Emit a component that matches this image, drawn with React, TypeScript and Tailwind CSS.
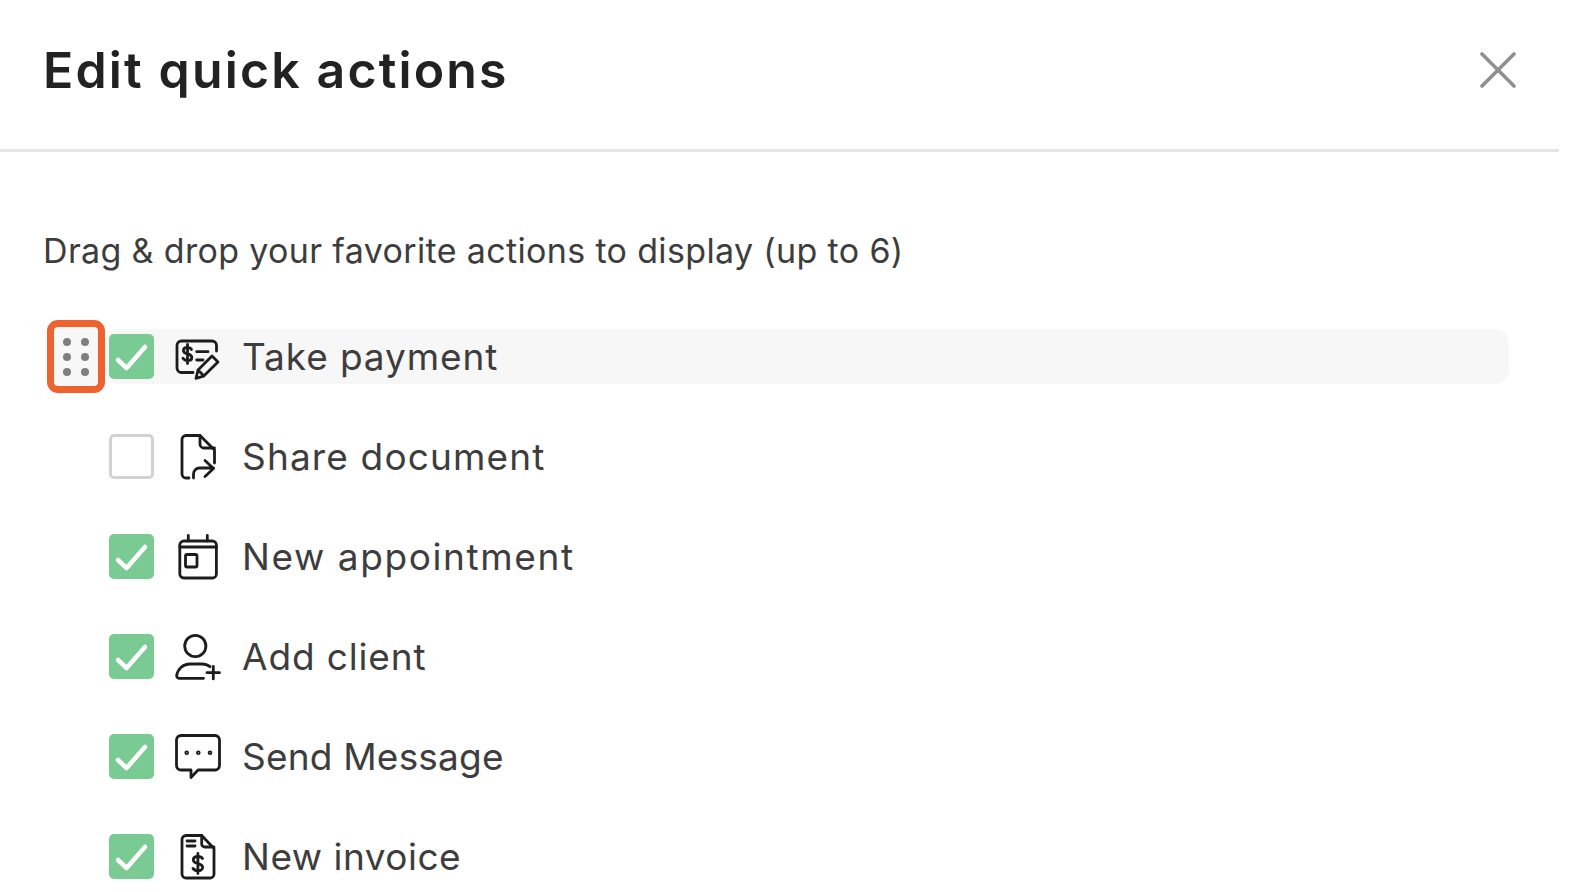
import React from "react";

const S = { fill: "none", stroke: "#1c1c1c", strokeWidth: 2.8, strokeLinecap: "round" as const, strokeLinejoin: "round" as const };

function Ico({ children }: { children: React.ReactNode }) {
  return (
    <svg width="48" height="48" viewBox="0 0 48 48" {...S} className="shrink-0">
      {children}
    </svg>
  );
}

const Payment = () => (
  <Ico>
    <path d="M19 39.5H7.5a4.5 4.5 0 0 1-4.5-4.5V12.5A4.5 4.5 0 0 1 7.5 8h30.5a4.5 4.5 0 0 1 4.5 4.5V18" />
    <path d="M17.5 16.5c-1-1.6-2.5-2.2-4.2-2.2-2.3 0-3.9 1.2-3.9 3.1 0 4.6 8.4 2.4 8.4 7 0 2-1.8 3.2-4.2 3.2-1.9 0-3.5-.8-4.6-2.4M13.5 11.5v19" />
    <path d="M22.7 18.7H34M22.7 27H29" />
    <path d="M22 45.3l2-8.3L38 23l6 6-14.5 14.2zM24 37l6 6" />
  </Ico>
);
const Share = () => (
  <Ico>
    <path d="M15 45H12a4 4 0 0 1-4-4V6.5a4 4 0 0 1 4-4H26L40.5 17V30" />
    <path d="M26 2.5V11a4 4 0 0 0 4 4H40.5" />
    <path d="M19.5 45V41a6 6 0 0 1 6-6H39.5M31 27.5L39.5 35.5L31 43.5" />
  </Ico>
);
const Calendar = () => (
  <Ico>
    <rect x="5.8" y="8" width="36.6" height="37" rx="4" />
    <path d="M14.3 2.5V8M33.3 2.5V8M5.8 14H42.4" />
    <rect x="11.5" y="21.5" width="11.5" height="12.5" rx="1.5" />
  </Ico>
);
const Client = () => (
  <Ico>
    <circle cx="21.3" cy="13" r="10.6" />
    <path d="M29.5 45.3H5a2.4 2.4 0 0 1-2.3-2.8C3.8 36 9 31 16 31h11.7c3 0 6 .9 8.3 2.7" />
    <path d="M39.3 33.5v12.4M33 39.7H45.5" />
  </Ico>
);
const Message = () => (
  <Ico>
    <path d="M7 2.5H41a4.5 4.5 0 0 1 4.5 4.5V32.5a4.5 4.5 0 0 1-4.5 4.5H24L17 44.5V37H7a4.5 4.5 0 0 1-4.5-4.5V7A4.5 4.5 0 0 1 7 2.5z" />
    <circle cx="12.7" cy="19.7" r="0.9" />
    <circle cx="24.3" cy="19.7" r="0.9" />
    <circle cx="36" cy="19.7" r="0.9" />
  </Ico>
);
const Invoice = () => (
  <Ico>
    <path d="M12 2.5H27.7L40 15.5V41a4 4 0 0 1-4 4H12a4 4 0 0 1-4-4V6.5a4 4 0 0 1 4-4z" />
    <path d="M27.7 2.5V11a3 3 0 0 0 3 3H40" />
    <path d="M13 8H21M13 13H21" />
    <path d="M28.5 25.5c-.9-1.4-2.6-2-4.6-2-2.7 0-4.6 1.3-4.6 3.4 0 4.6 9.4 2.8 9.4 7.4 0 2-2 3.4-4.8 3.4-2.1 0-3.9-.8-4.9-2.3M23.9 20.5v20" />
  </Ico>
);

function Check({ on }: { on: boolean }) {
  if (!on)
    return <span className="w-[45px] h-[45px] shrink-0 rounded-[5px] border-[3px] border-[#d2d2d2] bg-white" />;
  return (
    <span className="w-[45px] h-[45px] shrink-0 rounded-[5px] bg-[#7acb93] flex items-center justify-center">
      <svg width="45" height="45" viewBox="0 0 45 45" fill="none" stroke="#ffffff" strokeWidth="4.5" strokeLinecap="round" strokeLinejoin="round">
        <path d="M9 26l8.6 8L36 13" />
      </svg>
    </span>
  );
}

const rows: { label: string; on: boolean; Icon: React.FC; track: string }[] = [
  { label: "Take payment", on: true, Icon: Payment, track: "tracking-[0.9px]" },
  { label: "Share document", on: false, Icon: Share, track: "tracking-[1.15px]" },
  { label: "New appointment", on: true, Icon: Calendar, track: "tracking-[1.6px]" },
  { label: "Add client", on: true, Icon: Client, track: "tracking-[0.85px]" },
  { label: "Send Message", on: true, Icon: Message, track: "tracking-[0.2px]" },
  { label: "New invoice", on: true, Icon: Invoice, track: "tracking-[0.5px]" },
];

export default function App() {
  return (
    <div className="h-[892px] w-[1570px] overflow-hidden bg-white font-['Inter',sans-serif] text-[#333333]">
      <header className="h-[152px] w-[1559px] border-b-[3px] border-[#e6e6e6] flex items-center justify-between pl-[43px] pr-[43px] pb-[9px]">
        <h1 className="text-[50px] tracking-[2.15px] font-semibold text-[#222222] leading-none">Edit quick actions</h1>
        <svg width="36" height="36" viewBox="0 0 36 36" fill="none" stroke="#8f8f8f" strokeWidth="3.6" strokeLinecap="round" className="shrink-0">
          <path d="M2 2L34 34M34 2L2 34" />
        </svg>
      </header>
      <p className="pl-[43px] pt-[78px] text-[34px] tracking-[0.35px] leading-[42px] text-[#3d3d3d]">
        Drag &amp; drop your favorite actions to display (up to 6)
      </p>
      <ul className="mt-[57px] pl-[105px] w-[1509px]">
        {rows.map(({ label, on, Icon, track }, i) => (
          <li
            key={label}
            className={`relative flex items-center h-[55px] mb-[45px] pl-[4px] rounded-[14px] ${i === 0 ? "bg-[#f7f7f7]" : ""}`}
          >
            {i === 0 && (
              <span className="absolute left-[-58px] top-[-9px] w-[58px] h-[73px] rounded-[11px] border-[7px] border-[#ee6230] bg-[#f7f7f7] grid grid-cols-2 place-items-center content-center gap-x-[6px] gap-y-[7px] px-[7px]">
                {[0, 1, 2, 3, 4, 5].map((d) => (
                  <span key={d} className="w-[8px] h-[8px] rounded-full bg-[#7f7f7f]" />
                ))}
              </span>
            )}
            <Check on={on} />
            <span className="ml-[20px] mr-[20px] flex"><Icon /></span>
            <span className={`text-[37px] leading-none text-[#3d3d3d] ${track}`}>{label}</span>
          </li>
        ))}
      </ul>
    </div>
  );
}
